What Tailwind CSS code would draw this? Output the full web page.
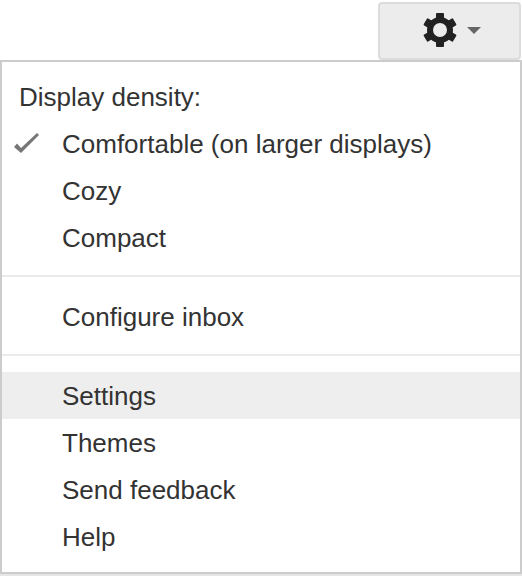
<!DOCTYPE html>
<html lang="en">
<head>
    <meta charset="UTF-8">
    <title>Settings menu</title>
    <script src="https://cdn.jsdelivr.net/npm/@tailwindcss/browser@4"></script>
</head>
<body class="bg-white">
    <div class="w-[522px] h-[576px] overflow-hidden font-['Liberation_Sans',Arial,sans-serif] text-[26px] text-[#333]">
        <!-- Gear button -->
        <div class="flex justify-end pt-[2px] pr-[1px]">
            <div class="w-[143px] h-[58px] flex items-center justify-center gap-[9px] pl-[4px] pb-[2px] bg-[#ececec] border-2 border-[#dcdcdc] rounded-[4px]">
                <svg class="w-[36px] h-[36px]" viewBox="0 0 36 36">
                    <circle cx="18" cy="18" r="10" fill="none" stroke="#222" stroke-width="6"/>
                    <g fill="#222">
                        <rect x="14" y="1" width="8" height="8" rx="1"/>
                        <rect x="14" y="1" width="8" height="8" rx="1" transform="rotate(60 18 18)"/>
                        <rect x="14" y="1" width="8" height="8" rx="1" transform="rotate(120 18 18)"/>
                        <rect x="14" y="1" width="8" height="8" rx="1" transform="rotate(180 18 18)"/>
                        <rect x="14" y="1" width="8" height="8" rx="1" transform="rotate(240 18 18)"/>
                        <rect x="14" y="1" width="8" height="8" rx="1" transform="rotate(300 18 18)"/>
                    </g>
                </svg>
                <div class="w-0 h-0 border-x-[7px] border-x-transparent border-t-[7px] border-t-[#666]"></div>
            </div>
        </div>

        <!-- Menu -->
        <div class="w-[522px] h-[514px] border-2 border-[#ccc] bg-white pt-[11px] shadow-[0_2px_0_#e6e6e6]">
            <div class="pl-[17px] h-[47px] leading-[49px]">Display density:</div>
            <div class="relative pl-[60px] h-[47px] leading-[49px]">
                <svg class="absolute left-[12px] top-[9px] w-[28px] h-[26px]" viewBox="0 0 28 26">
                    <polygon points="0,18 3,14.500 7,19 23,4 25,6 7,24" fill="#777"/>
                </svg>
                Comfortable (on larger displays)
            </div>
            <div class="pl-[60px] h-[47px] leading-[49px]">Cozy</div>
            <div class="pl-[60px] h-[47px] leading-[49px]">Compact</div>
            <div class="h-[2px] bg-[#ebebeb] mt-[14px] mb-[17px]"></div>
            <div class="pl-[60px] h-[46px] leading-[46px]">Configure inbox</div>
            <div class="h-[2px] bg-[#ebebeb] mt-[14px] mb-[16px]"></div>
            <div class="pl-[60px] h-[47px] leading-[49px] bg-[#eee]">Settings</div>
            <div class="pl-[60px] h-[47px] leading-[49px]">Themes</div>
            <div class="pl-[60px] h-[47px] leading-[49px]">Send feedback</div>
            <div class="pl-[60px] h-[47px] leading-[49px]">Help</div>
        </div>
    </div>
</body>
</html>
